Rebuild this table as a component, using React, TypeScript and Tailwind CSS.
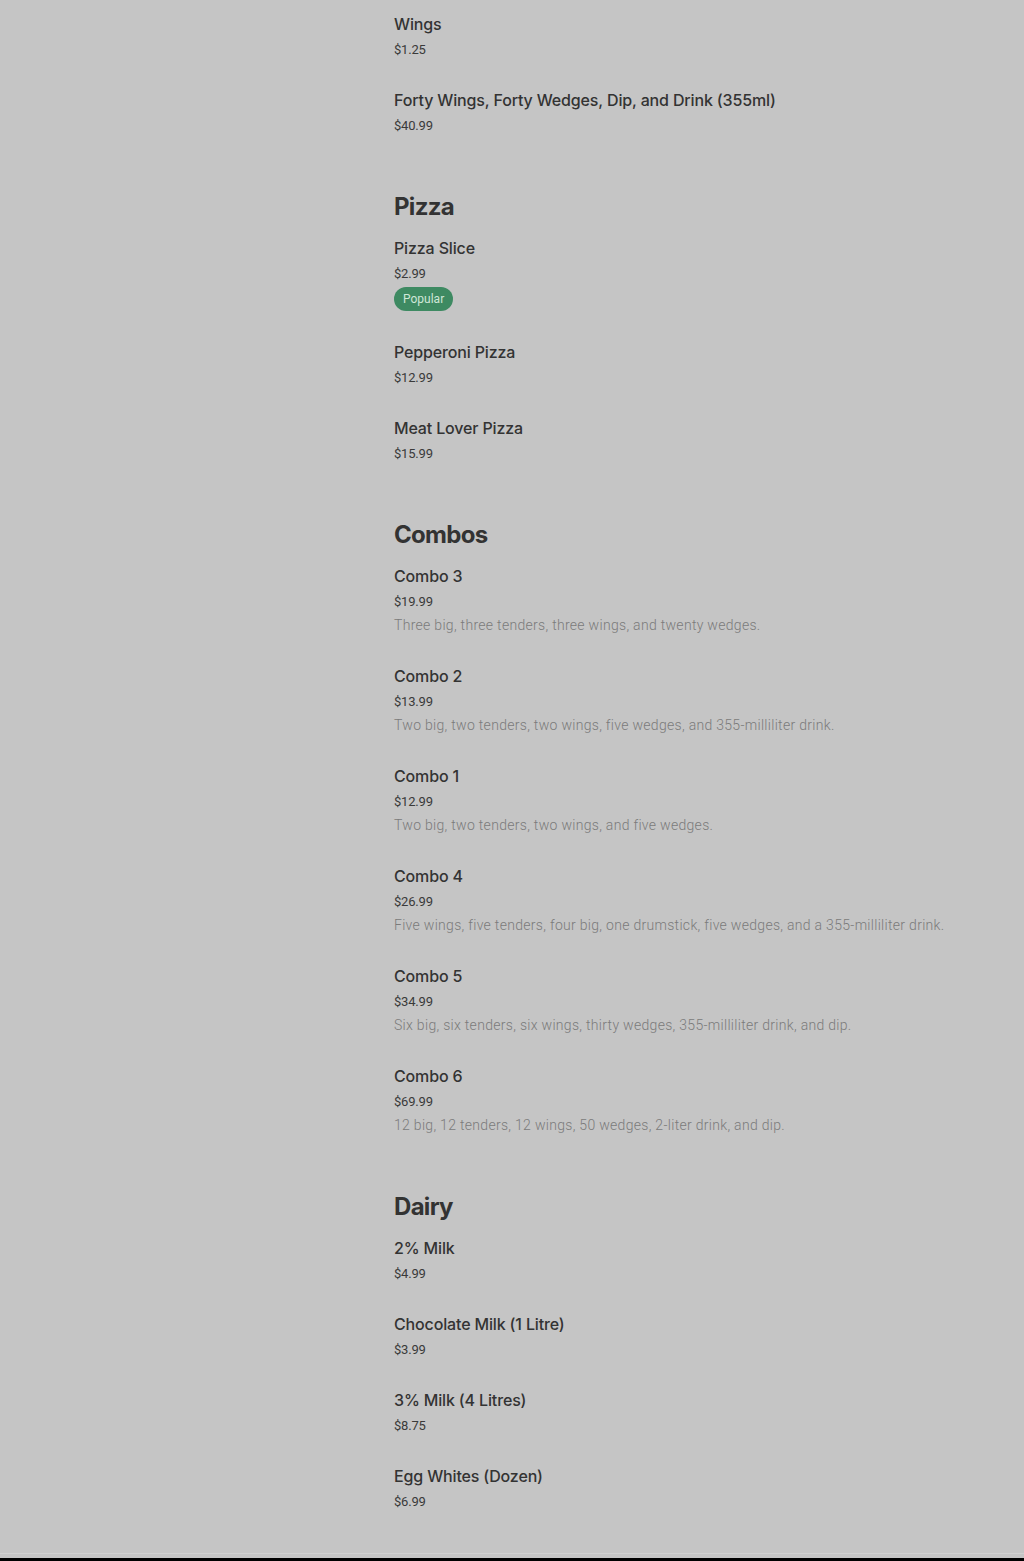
type Item = {
  name: string;
  price: string;
  description?: string;
  popular?: boolean;
};

type Section = {
  title?: string;
  items: Item[];
};

const SECTIONS: Section[] = [
  {
    items: [
      { name: 'Wings', price: '$1.25' },
      { name: 'Forty Wings, Forty Wedges, Dip, and Drink (355ml)', price: '$40.99' },
    ],
  },
  {
    title: 'Pizza',
    items: [
      { name: 'Pizza Slice', price: '$2.99', popular: true },
      { name: 'Pepperoni Pizza', price: '$12.99' },
      { name: 'Meat Lover Pizza', price: '$15.99' },
    ],
  },
  {
    title: 'Combos',
    items: [
      { name: 'Combo 3', price: '$19.99', description: 'Three big, three tenders, three wings, and twenty wedges.' },
      { name: 'Combo 2', price: '$13.99', description: 'Two big, two tenders, two wings, five wedges, and 355-milliliter drink.' },
      { name: 'Combo 1', price: '$12.99', description: 'Two big, two tenders, two wings, and five wedges.' },
      { name: 'Combo 4', price: '$26.99', description: 'Five wings, five tenders, four big, one drumstick, five wedges, and a 355-milliliter drink.' },
      { name: 'Combo 5', price: '$34.99', description: 'Six big, six tenders, six wings, thirty wedges, 355-milliliter drink, and dip.' },
      { name: 'Combo 6', price: '$69.99', description: '12 big, 12 tenders, 12 wings, 50 wedges, 2-liter drink, and dip.' },
    ],
  },
  {
    title: 'Dairy',
    items: [
      { name: '2% Milk', price: '$4.99' },
      { name: 'Chocolate Milk (1 Litre)', price: '$3.99' },
      { name: '3% Milk (4 Litres)', price: '$8.75' },
      { name: 'Egg Whites (Dozen)', price: '$6.99' },
    ],
  },
];

function MenuItem({ item }: { item: Item }) {
  return (
    <div className={item.description ? 'pt-3 pb-[15px]' : 'pt-3 pb-[14px]'}>
      <div className="font-['Inter',sans-serif] text-[16px] leading-6 font-medium tracking-[-0.15px] text-[#333333]">
        {item.name}
      </div>
      <div className="mt-[2px] text-[13px] leading-6 tracking-[-0.2px] text-[#3a3a3a]">{item.price}</div>
      {item.description ? (
        <div className="-mt-px text-[14px] leading-6 font-light tracking-[0.3px] text-[#7b7b7b]">
          {item.description}
        </div>
      ) : null}
      {item.popular ? (
        <div className="mt-px mb-[3px] flex">
          <span className="inline-flex h-6 items-center rounded-full bg-[#3e8a62] px-[9px] text-[12px] text-[#cfe7d8]">
            Popular
          </span>
        </div>
      ) : null}
    </div>
  );
}

export default function App() {
  return (
    <div className="flex min-h-[1561px] flex-col bg-[#c5c5c5] font-['Roboto',sans-serif]">
      <main className="flex-1 pl-[394px]">
        {SECTIONS.map((section, i) => (
          <section key={i} className={section.title ? 'mt-[39px]' : ''}>
            {section.title ? (
              <h2 className="mb-px font-['Inter',sans-serif] text-[24px] leading-8 font-bold tracking-[-0.7px] text-[#333333]">
                {section.title}
              </h2>
            ) : null}
            {section.items.map((item) => (
              <MenuItem key={item.name} item={item} />
            ))}
          </section>
        ))}
      </main>
      <div className="h-[5px] border-t border-[#d0d0d0]" />
      <div className="h-[3px] bg-black" />
    </div>
  );
}
